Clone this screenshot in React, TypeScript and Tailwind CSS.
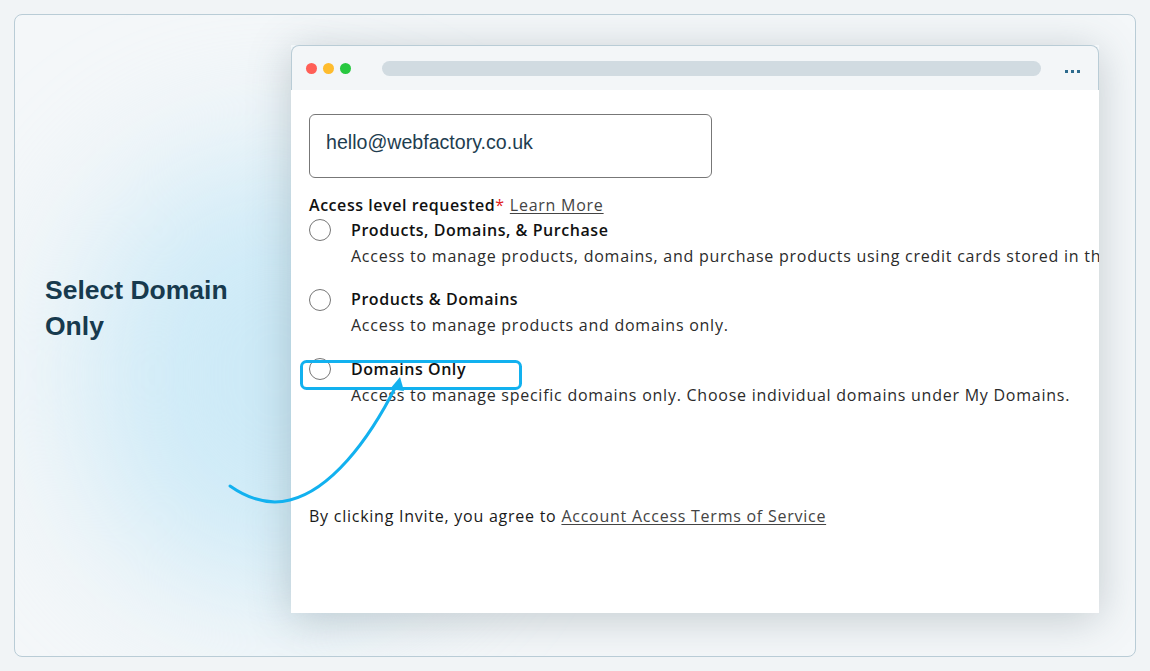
const OPTIONS = [
  {
    title: 'Products, Domains, & Purchase',
    text: 'Access to manage products, domains, and purchase products using credit cards stored in the account.',
  },
  { title: 'Products & Domains', text: 'Access to manage products and domains only.' },
  {
    title: 'Domains Only',
    text: 'Access to manage specific domains only. Choose individual domains under My Domains.',
  },
];

const formFont = { fontFamily: '"Open Sans", "Noto Sans", sans-serif' };

function Radio() {
  return <span className="block h-[22px] w-[22px] rounded-full border-[1.5px] border-[#767676] bg-white" />;
}

function BrowserWindow() {
  return (
    <div className="relative z-10 mt-[30px] flex h-[568px] w-[808px] flex-col shadow-[0_6px_40px_rgba(70,90,100,0.28)]">
      <div className="flex h-[45px] items-center rounded-t-lg border-x border-t border-[#b9ccd6] bg-[#f3f6f8] pl-[14px] pr-[18px]">
        <div className="flex gap-[6px]">
          <span className="h-[11px] w-[11px] rounded-full bg-[#ff5f57]" />
          <span className="h-[11px] w-[11px] rounded-full bg-[#febc2e]" />
          <span className="h-[11px] w-[11px] rounded-full bg-[#28c840]" />
        </div>
        <div className="ml-[31px] h-[15px] w-[659px] rounded-full bg-[#d1dbe1]" />
        <div className="ml-auto mt-[7px] flex gap-[3px]">
          <span className="h-[3px] w-[3px] bg-[#2d6b8e]" />
          <span className="h-[3px] w-[3px] bg-[#2d6b8e]" />
          <span className="h-[3px] w-[3px] bg-[#2d6b8e]" />
        </div>
      </div>

      <div className="flex-1 overflow-hidden bg-white pl-[18px] pt-[24px] text-[16px] tracking-[0.75px] text-[#111]" style={formFont}>
        <div
          className="flex h-[64px] w-[403px] items-center rounded-md border border-[#777] px-[16px] pb-[6px] text-[19.6px] tracking-normal text-[#1e3d50]"
          style={{ fontFamily: '"Liberation Sans", Arial, sans-serif' }}
        >
          hello@webfactory.co.uk
        </div>

        <div className="mt-[14.5px] whitespace-nowrap leading-[25px]">
          <span className="font-semibold tracking-[0.55px]">Access level requested</span>
          <span className="text-[#e02020]">*</span>{' '}
          <span className="text-[#444] underline underline-offset-2">Learn More</span>
        </div>

        <div className="flex flex-col gap-[18.5px]">
          {OPTIONS.map((o) => (
            <div key={o.title} className="flex whitespace-nowrap leading-[25px]">
              <div className="flex h-[25px] w-[42px] shrink-0 items-center">
                <Radio />
              </div>
              <div>
                <div className="font-semibold tracking-[0.55px]">{o.title}</div>
                <div className="mt-[1px] text-[#2b2b2b]">{o.text}</div>
              </div>
            </div>
          ))}
        </div>

        <div className="mt-[96px] whitespace-nowrap leading-[25px] text-[#1a1a1a]">
          By clicking Invite, you agree to{' '}
          <span className="text-[#444] underline underline-offset-2">Account Access Terms of Service</span>
        </div>
      </div>
    </div>
  );
}

export default function App() {
  return (
    <div className="h-[671px] w-[1150px] bg-[#f1f4f6] p-[14px]">
      <div className="relative flex h-full overflow-hidden rounded-lg border border-[#b9ccd6] bg-[#f4f7f9]">
        <div className="absolute left-[70px] top-[140px] h-[440px] w-[380px] rounded-full bg-[#cdeaf7] blur-[70px]" />

        <div className="relative z-10 w-[276px] shrink-0 pl-[30px] pt-[257px]">
          <h1
            className="text-[26.5px] font-bold leading-[36px] text-[#173a4e]"
            style={{ fontFamily: '"Liberation Sans", Arial, sans-serif' }}
          >
            Select Domain
            <br />
            Only
          </h1>
        </div>

        <BrowserWindow />

        <svg className="pointer-events-none absolute left-0 top-0 z-20 h-full w-full" viewBox="15 15 1120 641" fill="none">
          <rect x="301.5" y="361.5" width="219" height="27" rx="5" stroke="#12b1ef" strokeWidth="3" />
          <path
            d="M230 486 C250 500 270 505 290 500 C330 490 368 442 396 386"
            stroke="#12b1ef"
            strokeWidth="3"
            strokeLinecap="round"
          />
          <polygon points="400,377 390,389 404,391" fill="#12b1ef" />
        </svg>
      </div>
    </div>
  );
}
